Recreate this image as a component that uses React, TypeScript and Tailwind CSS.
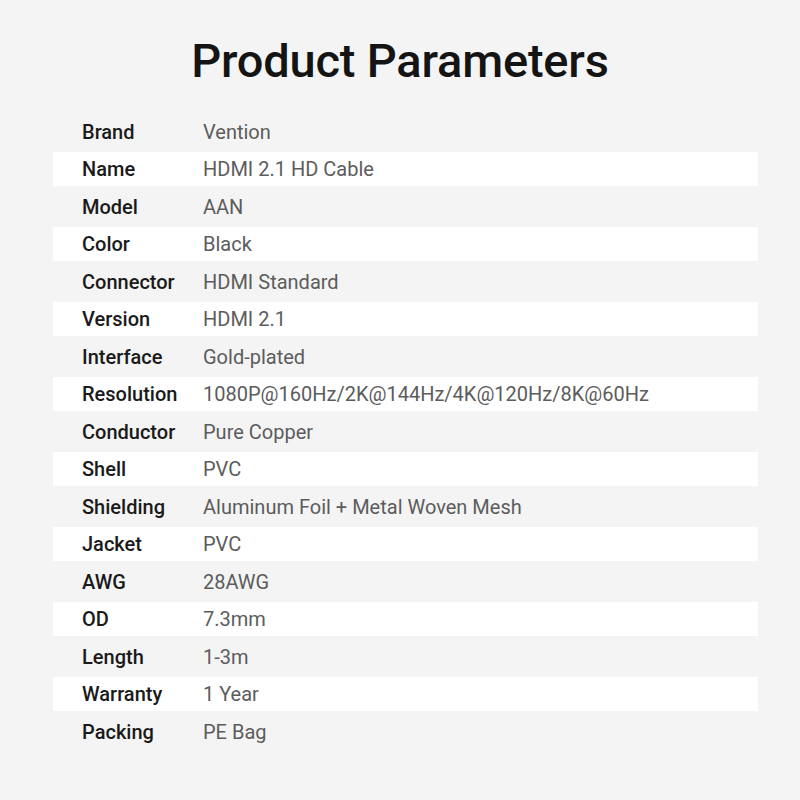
const params: [string, string][] = [
  ['Brand', 'Vention'],
  ['Name', 'HDMI 2.1 HD Cable'],
  ['Model', 'AAN'],
  ['Color', 'Black'],
  ['Connector', 'HDMI Standard'],
  ['Version', 'HDMI 2.1'],
  ['Interface', 'Gold-plated'],
  ['Resolution', '1080P@160Hz/2K@144Hz/4K@120Hz/8K@60Hz'],
  ['Conductor', 'Pure Copper'],
  ['Shell', 'PVC'],
  ['Shielding', 'Aluminum Foil + Metal Woven Mesh'],
  ['Jacket', 'PVC'],
  ['AWG', '28AWG'],
  ['OD', '7.3mm'],
  ['Length', '1-3m'],
  ['Warranty', '1 Year'],
  ['Packing', 'PE Bag'],
]

const App = () => {
  return (
    <div className="w-[800px] h-[800px] bg-[#f4f4f4] flex flex-col font-['Roboto',sans-serif]">
      <h1 className="mt-[31px] h-[60px] leading-[60px] text-center text-[47px] font-medium text-[#141414] tracking-[-0.2px]">
        Product Parameters
      </h1>
      <div className="mt-[20px] ml-[53px] w-[705px] flex flex-col">
        {params.map(([label, value], index) => (
          <div
            key={label}
            className={
              index % 2 === 1
                ? 'h-[34px] bg-white flex items-center'
                : 'h-[41px] flex items-center'
            }
          >
            <div className="w-[150px] pl-[29px] text-[20px] font-medium text-[#1a1a1a]">{label}</div>
            <div className="text-[20px] text-[#5c5c5c]">{value}</div>
          </div>
        ))}
      </div>
    </div>
  )
}

export default App
